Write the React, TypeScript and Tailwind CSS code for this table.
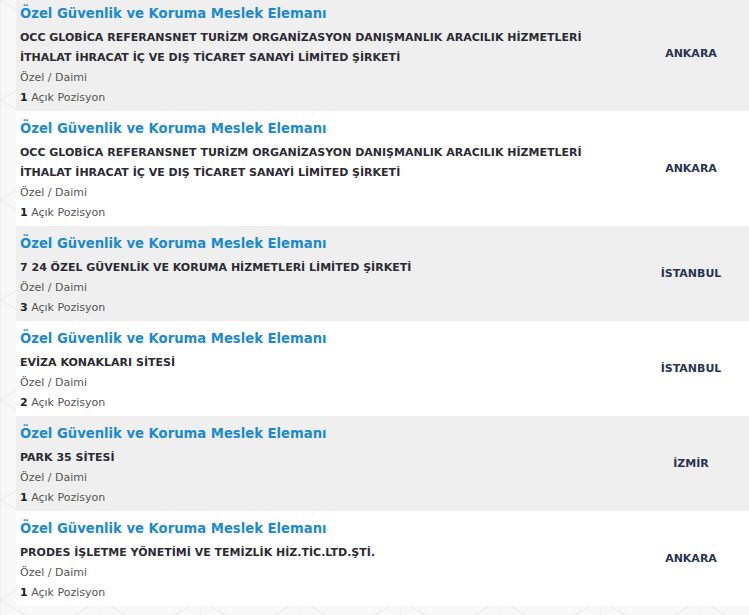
import React from "react";

interface Job {
  title: string;
  company: string[];
  type: string;
  count: number;
  city: string;
}

const jobs: Job[] = [
  {
    title: "Özel Güvenlik ve Koruma Meslek Elemanı",
    company: [
      "OCC GLOBİCA REFERANSNET TURİZM ORGANİZASYON DANIŞMANLIK ARACILIK HİZMETLERİ",
      "İTHALAT İHRACAT İÇ VE DIŞ TİCARET SANAYİ LİMİTED ŞİRKETİ",
    ],
    type: "Özel / Daimi",
    count: 1,
    city: "ANKARA",
  },
  {
    title: "Özel Güvenlik ve Koruma Meslek Elemanı",
    company: [
      "OCC GLOBİCA REFERANSNET TURİZM ORGANİZASYON DANIŞMANLIK ARACILIK HİZMETLERİ",
      "İTHALAT İHRACAT İÇ VE DIŞ TİCARET SANAYİ LİMİTED ŞİRKETİ",
    ],
    type: "Özel / Daimi",
    count: 1,
    city: "ANKARA",
  },
  {
    title: "Özel Güvenlik ve Koruma Meslek Elemanı",
    company: ["7 24 ÖZEL GÜVENLİK VE KORUMA HİZMETLERİ LİMİTED ŞİRKETİ"],
    type: "Özel / Daimi",
    count: 3,
    city: "İSTANBUL",
  },
  {
    title: "Özel Güvenlik ve Koruma Meslek Elemanı",
    company: ["EVİZA KONAKLARI SİTESİ"],
    type: "Özel / Daimi",
    count: 2,
    city: "İSTANBUL",
  },
  {
    title: "Özel Güvenlik ve Koruma Meslek Elemanı",
    company: ["PARK 35 SİTESİ"],
    type: "Özel / Daimi",
    count: 1,
    city: "İZMİR",
  },
  {
    title: "Özel Güvenlik ve Koruma Meslek Elemanı",
    company: ["PRODES İŞLETME YÖNETİMİ VE TEMİZLİK HİZ.TİC.LTD.ŞTİ."],
    type: "Özel / Daimi",
    count: 1,
    city: "ANKARA",
  },
];

// faint decorative lines of the page background
const Pattern = () => (
  <svg className="absolute inset-0 h-full w-full" xmlns="http://www.w3.org/2000/svg">
    <defs>
      <pattern id="bgp" width="100" height="100" patternUnits="userSpaceOnUse">
        <path
          d="M0 0 L50 30 L100 0 M50 30 L50 70 M0 100 L50 70 L100 100 M0 0 L0 100"
          fill="none"
          stroke="#ececec"
          strokeWidth="1.5"
        />
      </pattern>
    </defs>
    <rect width="100%" height="100%" fill="url(#bgp)" />
  </svg>
);

const JobRow = ({ job, striped }: { job: Job; striped: boolean }) => (
  <div className={`flex items-center ${striped ? "bg-[#efefef]" : "bg-white"}`}>
    <div className="flex-1 pl-1 pt-[8px] pb-[3px]">
      <a href="#" className="block text-[13.2px] leading-[20px] font-bold text-[#1b8ad0]">
        {job.title}
      </a>
      <div className="mt-1 text-[11px] leading-[20px] font-bold text-[#2b2b33]">
        {job.company.map((line) => (
          <div key={line}>{line}</div>
        ))}
      </div>
      <div className="text-[11px] leading-[20px] text-[#555]">{job.type}</div>
      <div className="text-[11px] leading-[20px] text-[#555]">
        <b className="text-[#222]">{job.count}</b> Açık Pozisyon
      </div>
    </div>
    <div className="w-[116px] pt-[2px] text-center text-[11px] font-bold text-[#2a3450]">{job.city}</div>
  </div>
);

export default function App() {
  return (
    <div
      className="relative h-[615px] w-[749px] overflow-hidden bg-[#f8f8f8]"
      style={{ fontFamily: '"DejaVu Sans", Verdana, sans-serif' }}
    >
      <Pattern />
      <div className="relative -mt-1 ml-4">
        {jobs.map((job, i) => (
          <JobRow key={i} job={job} striped={i % 2 === 0} />
        ))}
      </div>
    </div>
  );
}
